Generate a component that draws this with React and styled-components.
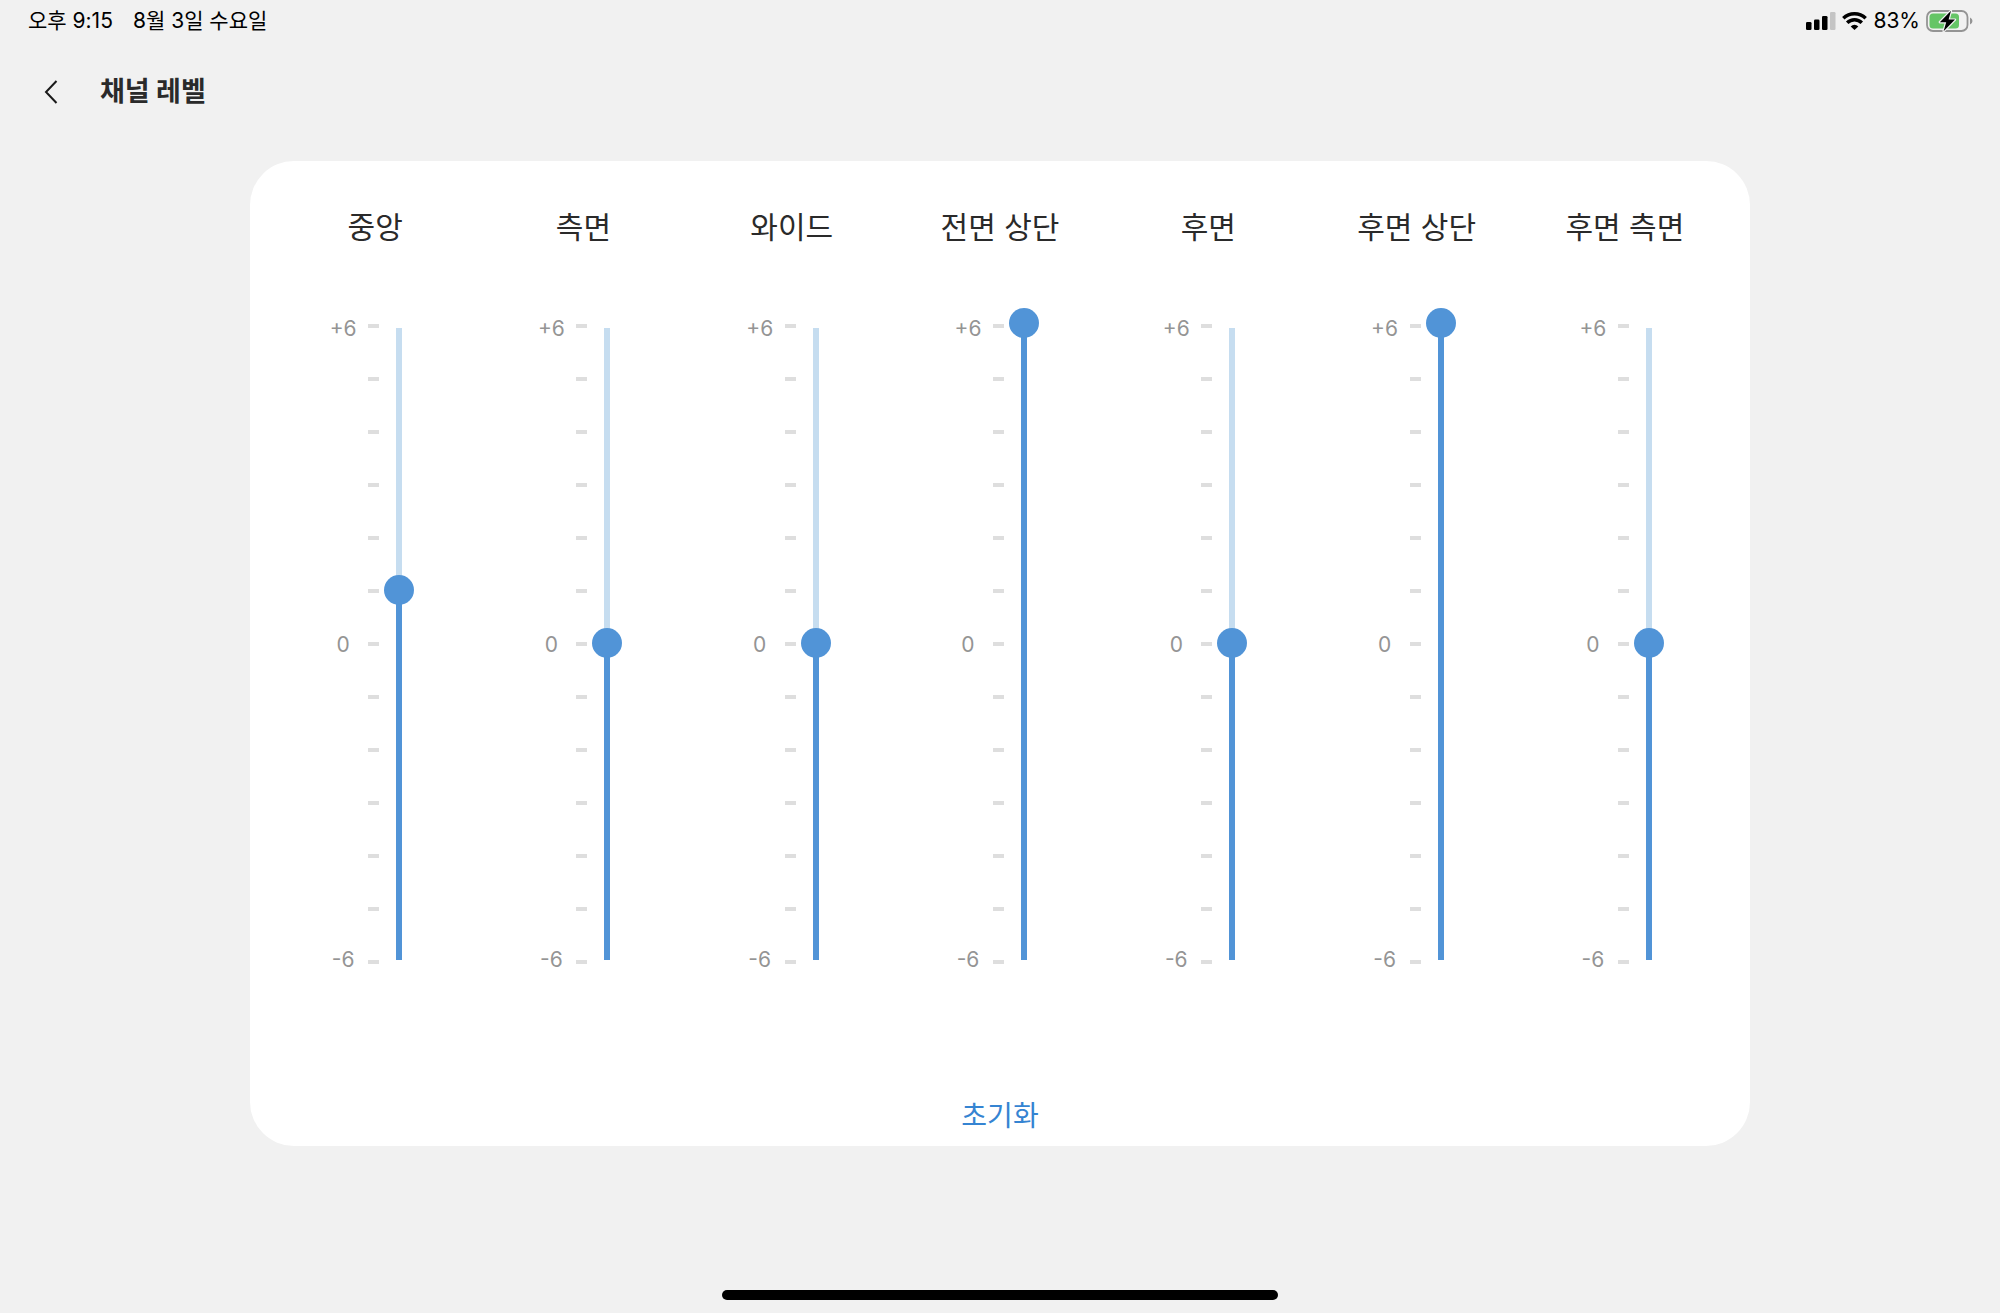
import { useState } from "react"
import styled, { createGlobalStyle } from "styled-components"

const MAX = 6
const TICKS = Array.from({ length: 13 }, (_, i) => i)

const channels = [
    { id: "center", name: "중앙", level: 1 },
    { id: "side", name: "측면", level: 0 },
    { id: "wide", name: "와이드", level: 0 },
    { id: "front-top", name: "전면 상단", level: 6 },
    { id: "rear", name: "후면", level: 0 },
    { id: "rear-top", name: "후면 상단", level: 6 },
    { id: "rear-side", name: "후면 측면", level: 0 },
]

const App = () => {
    const [levels, setLevels] = useState(channels.map((channel) => channel.level))

    const changeLevel = (index, value) => {
        setLevels(levels.map((level, i) => (i === index ? value : level)))
    }

    return (
        <Page>
            <GlobalStyle />
            <StatusBar>
                <StatusGroup $gap="20px">
                    <span>오후 9:15</span>
                    <span>8월 3일 수요일</span>
                </StatusGroup>
                <StatusGroup $gap="6px">
                    <SignalIcon />
                    <WifiIcon />
                    <span>83%</span>
                    <BatteryIcon />
                </StatusGroup>
            </StatusBar>
            <Header>
                <BackButton aria-label="뒤로">
                    <svg width="14" height="26" viewBox="0 0 14 26" fill="none" stroke="#1a1a1a" strokeWidth="2">
                        <path d="M12.5 2 L2 13 L12.5 24" />
                    </svg>
                </BackButton>
                <PageTitle>채널 레벨</PageTitle>
            </Header>
            <Card>
                <Channels>
                    {channels.map((channel, index) => (
                        <Channel key={channel.id}>
                            <ChannelName htmlFor={channel.id}>{channel.name}</ChannelName>
                            <Control>
                                <Scale>
                                    <span>+6</span>
                                    <span>0</span>
                                    <span>-6</span>
                                </Scale>
                                <Ticks>
                                    {TICKS.map((tick) => <Tick key={tick} />)}
                                </Ticks>
                                <Slider
                                    id={channel.id}
                                    type="range"
                                    min={-MAX}
                                    max={MAX}
                                    value={levels[index]}
                                    onChange={(e) => changeLevel(index, Number(e.target.value))}
                                    style={{ "--rest": `${((MAX - levels[index]) / (MAX * 2)) * 100}%` }}
                                />
                            </Control>
                        </Channel>
                    ))}
                </Channels>
                <ResetButton onClick={() => setLevels(channels.map(() => 0))}>초기화</ResetButton>
            </Card>
            <HomeIndicator />
        </Page>
    )
}

export default App

const SignalIcon = () => (
    <svg width="30" height="20" viewBox="0 0 30 20">
        <rect x="0" y="11" width="5.5" height="8" rx="1.3" />
        <rect x="8" y="8.5" width="5.5" height="10.5" rx="1.3" />
        <rect x="16" y="5" width="5.5" height="14" rx="1.3" />
        <rect x="24" y="1" width="5.5" height="18" rx="1.3" fill="#c4c4c4" />
    </svg>
)

const WifiIcon = () => (
    <svg width="25" height="20" viewBox="0 0 25 20" fill="none" stroke="#000" strokeWidth="3.4">
        <path d="M1.3 7.3 A16 16 0 0 1 23.7 7.3" />
        <path d="M5.2 11.8 A10.2 10.2 0 0 1 19.8 11.8" />
        <path d="M12.5 19 L8.7 15.4 A5.4 5.4 0 0 1 16.3 15.4 Z" fill="#000" stroke="none" />
    </svg>
)

const BatteryIcon = () => (
    <svg width="47" height="24" viewBox="0 0 47 24">
        <rect x="1" y="2" width="40.5" height="20" rx="6" fill="none" stroke="#949494" strokeWidth="1.8" />
        <rect x="3.5" y="4.5" width="29.5" height="15" rx="3.5" fill="#65c566" />
        <path d="M44 8.5 Q46.5 9.5 46.5 12 Q46.5 14.5 44 15.5 Z" fill="#949494" />
        <path
            d="M25 1.8 L13.8 13.2 H20.2 L17.6 22.2 L29 10.6 H22.6 Z"
            fill="#000"
            stroke="#f1f1f1"
            strokeWidth="2.4"
            strokeLinejoin="round"
            paintOrder="stroke"
        />
    </svg>
)

const GlobalStyle = createGlobalStyle`
    * {
        box-sizing: border-box;
    }
    body {
        margin: 0;
        background-color: #f1f1f1;
        font-family: Inter, "Noto Sans CJK KR", sans-serif;
        color: #2a2a2a;
    }
    button {
        padding: 0;
        border: none;
        background: none;
        font-family: inherit;
        cursor: pointer;
    }
`
const Page = styled.div`
    min-height: 100vh;
    display: flex;
    flex-direction: column;
    align-items: center;
    padding-bottom: 13px;
`
const StatusBar = styled.div`
    width: 100%;
    height: 42px;
    padding: 0 27px 0 28px;
    display: flex;
    align-items: center;
    justify-content: space-between;
    font-size: 21px;
    font-weight: 400;
    line-height: 24px;
    color: #000;
`
const StatusGroup = styled.div`
    display: flex;
    align-items: center;
    gap: ${(props) => props.$gap};
`
const Header = styled.header`
    width: 100%;
    height: 100px;
    padding: 0 32px;
    display: flex;
    align-items: center;
    gap: 30px;
`
const BackButton = styled.button`
    width: 38px;
    height: 40px;
    display: flex;
    align-items: center;
    justify-content: center;
`
const PageTitle = styled.h1`
    margin: 0;
    font-size: 27px;
    font-weight: 700;
    line-height: 40px;
`
const Card = styled.main`
    width: 75%;
    margin: 19px 0 32px;
    padding: 46px 21px 10px;
    border-radius: 44px;
    background-color: white;
    display: flex;
    flex-direction: column;
    align-items: center;
`
const Channels = styled.div`
    width: 100%;
    display: grid;
    grid-template-columns: repeat(7, 1fr);
`
const Channel = styled.div`
    display: flex;
    flex-direction: column;
    align-items: center;
    gap: 61px;
`
const ChannelName = styled.label`
    font-size: 30px;
    line-height: 40px;
`
const Control = styled.div`
    height: 670px;
    padding-right: 13px;
    display: flex;
    gap: 5px;
`
const Scale = styled.div`
    width: 40px;
    padding: 9px 0 6px;
    display: flex;
    flex-direction: column;
    align-items: center;
    justify-content: space-between;
    font-size: 21px;
    font-weight: 400;
    line-height: 24px;
    color: #949494;
`
const Ticks = styled.div`
    width: 11px;
    padding: 16px 0 14px;
    display: flex;
    flex-direction: column;
    justify-content: space-between;
`
const Tick = styled.div`
    height: 4px;
    background-color: #dedede;
`
const Slider = styled.input`
    appearance: none;
    writing-mode: vertical-lr;
    direction: rtl;
    width: 30px;
    height: 100%;
    margin: 0;
    background: none;
    cursor: pointer;

    &::-webkit-slider-runnable-track {
        width: 30px;
        height: 100%;
        background: linear-gradient(to bottom, #c6ddf0 var(--rest), #5194d7 var(--rest)) no-repeat;
        background-size: 6px calc(100% - 38px);
        background-position: 12px 20px;
    }
    &::-webkit-slider-thumb {
        appearance: none;
        width: 30px;
        height: 30px;
        border-radius: 50%;
        background-color: #5194d7;
    }
`
const ResetButton = styled.button`
    margin-top: 118px;
    font-size: 28px;
    line-height: 40px;
    color: #3584d2;
`
const HomeIndicator = styled.div`
    width: 556px;
    max-width: 60%;
    height: 10px;
    margin-top: auto;
    border-radius: 5px;
    background-color: #000;
`
